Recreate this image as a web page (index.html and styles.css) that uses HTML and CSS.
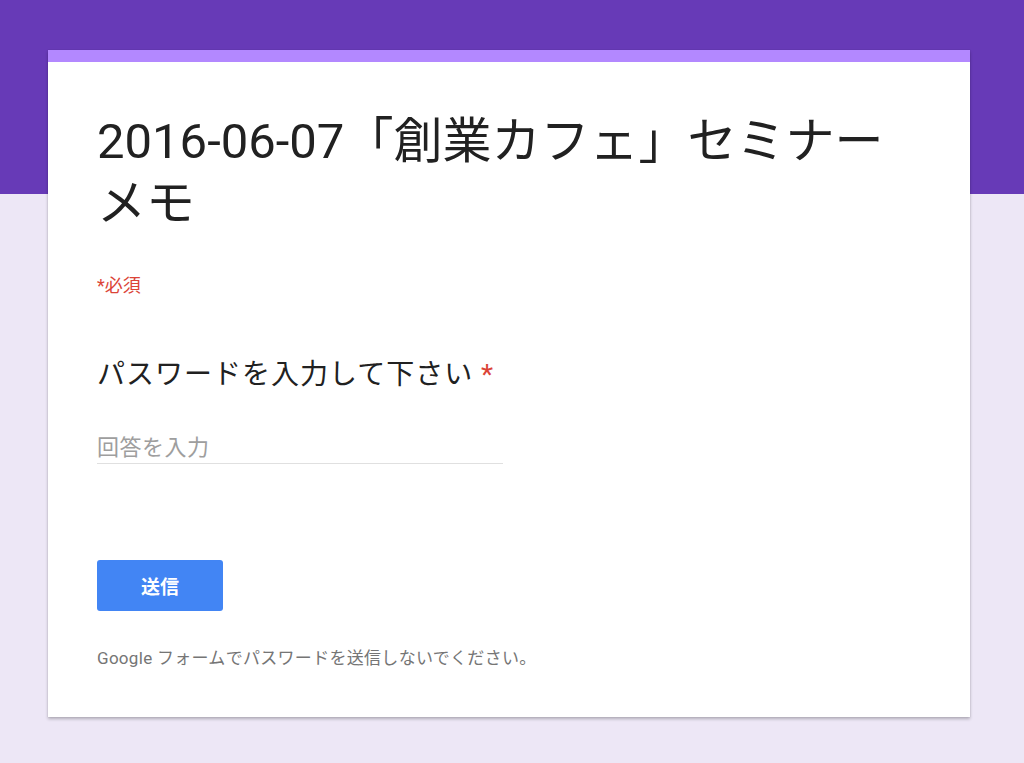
FILE: index.html
```html
<!DOCTYPE html>
<html lang="ja">
<head>
  <meta charset="UTF-8" />
  <meta name="viewport" content="width=device-width, initial-scale=1.0" />
  <title>2016-06-07「創業カフェ」セミナーメモ</title>
  <link rel="stylesheet" href="styles.css">
</head>
<body>
  <div id="form-page">
    <div class="form-card">
      <h1 class="form-title">2016-06-07「創業カフェ」セミナーメモ</h1>
      <p class="required-note">*必須</p>
      <div class="question">
        <label class="question-title" for="answer">パスワードを入力して下さい <span class="star">*</span></label>
        <input type="text" id="answer" class="answer-input" placeholder="回答を入力" />
      </div>
      <button class="btn-submit">送信</button>
      <p class="footer-note">Google フォームでパスワードを送信しないでください。</p>
    </div>
  </div>
</body>
</html>
```
FILE: styles.css
```css
* { box-sizing: border-box; }
body {
  margin: 0;
  font-family: Roboto, "Noto Sans CJK JP", sans-serif;
  background: linear-gradient(#673ab7 0, #673ab7 194px, #ede7f6 194px);
  min-height: 763px;
}
#form-page {
  padding-top: 50px;
}
.form-card {
  width: 922px; margin-left: 48px;
  background: #fff;
  border-top: 12px solid #b388ff;
  box-shadow: 0 2px 3px rgba(0,0,0,0.25), 0 0 1px rgba(0,0,0,0.15);
  padding: 49px 49px 47px;
}
.form-title {
  margin: 0; font-size: 49px; line-height: 62px;
  font-weight: 400; color: #212121;
  width: 810px;
}
.required-note {
  margin: 39px 0 0; font-size: 18px; line-height: 24px;
  color: #db4437;
}
.question { margin-top: 59px; }
.question-title {
  display: block; font-size: 28px; line-height: 36px; color: #212121;
  letter-spacing: 1px;
}
.star { color: #db4437; }
.answer-input {
  display: block; margin-top: 38px;
  width: 406px; height: 33px; padding: 0;
  border: none; border-bottom: 1px solid #e0e0e0;
  font-family: inherit; font-size: 22px; line-height: 32px;
  letter-spacing: 0.5px;
  color: #212121; outline: none; background: transparent;
}
.answer-input::placeholder { color: #9e9e9e; }
.btn-submit {
  display: block; margin-top: 96px;
  width: 126px; height: 51px;
  background: #4285f4; color: #fff;
  border: none; border-radius: 3px;
  font-family: inherit; font-size: 19px; font-weight: 700;
  cursor: pointer;
}
.footer-note {
  margin: 35px 0 0; font-size: 17px; line-height: 24px; color: #757575;
  letter-spacing: 0.3px;
}
```
